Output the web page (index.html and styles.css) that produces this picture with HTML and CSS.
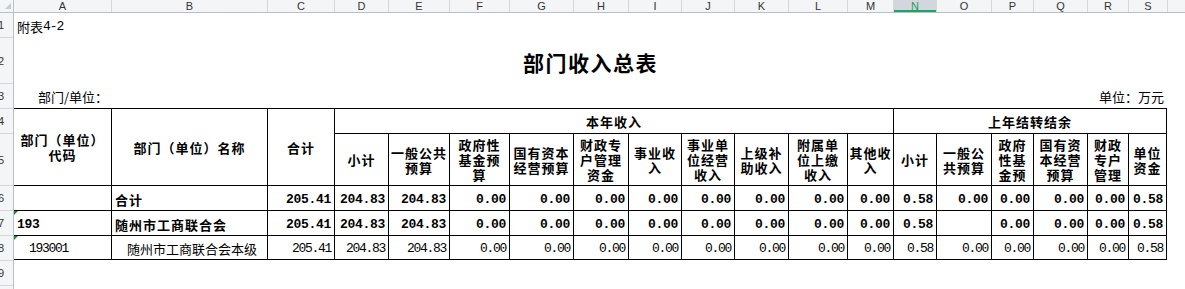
FILE: index.html
```html
<!DOCTYPE html>
<html lang="zh-CN">
<head>
<meta charset="utf-8">
<title>部门收入总表</title>
<link rel="stylesheet" href="styles.css">
</head>
<body>
<div class="colhead">
  <div class="corner"></div>
  <div class="ch first">A</div><div class="ch">B</div><div class="ch">C</div><div class="ch">D</div>
  <div class="ch">E</div><div class="ch">F</div><div class="ch">G</div><div class="ch">H</div>
  <div class="ch">I</div><div class="ch">J</div><div class="ch">K</div><div class="ch">L</div>
  <div class="ch">M</div><div class="ch sel">N</div><div class="ch">O</div><div class="ch">P</div>
  <div class="ch">Q</div><div class="ch">R</div><div class="ch">S</div><div class="ch"></div>
</div>
<div class="body">
  <div class="rowhead">
    <div class="rh h24"><span>1</span></div>
    <div class="rh h46"><span>2</span></div>
    <div class="rh h25"><span>3</span></div>
    <div class="rh h25"><span>4</span></div>
    <div class="rh h52"><span>5</span></div>
    <div class="rh h25"><span>6</span></div>
    <div class="rh h25"><span>7</span></div>
    <div class="rh h25"><span>8</span></div>
    <div class="rh h25"><span>9</span></div>
    <div class="rh h4"></div>
  </div>
  <div class="grid">
    <div class="note"><span>附表</span><span class="dg">4-2</span></div>
    <div class="title">部门收入总表</div>
    <div class="unit-l">部门/单位：</div>
    <div class="unit-r">单位：万元</div>

    <div class="t a hd rows2">部门（单位）<br>代码</div>
    <div class="t hd rows2">部门（单位）名称</div>
    <div class="t hd rows2">合计</div>
    <div class="t hd span10">本年收入</div>
    <div class="t hd span6 last">上年结转结余</div>

    <div class="t hd">小计</div>
    <div class="t hd">一般公共<br>预算</div>
    <div class="t hd">政府性<br>基金预<br>算</div>
    <div class="t hd">国有资本<br>经营预算</div>
    <div class="t hd">财政专<br>户管理<br>资金</div>
    <div class="t hd">事业收<br>入</div>
    <div class="t hd">事业单<br>位经营<br>收入</div>
    <div class="t hd">上级补<br>助收入</div>
    <div class="t hd">附属单<br>位上缴<br>收入</div>
    <div class="t hd">其他收<br>入</div>
    <div class="t hd">小计</div>
    <div class="t hd">一般公<br>共预算</div>
    <div class="t hd">政府<br>性基<br>金预</div>
    <div class="t hd">国有资<br>本经营<br>预算</div>
    <div class="t hd">财政<br>专户<br>管理</div>
    <div class="t hd last">单位<br>资金</div>

    <div class="t a"></div>
    <div class="t txt b">合计</div>
    <div class="t n b">205.41</div>
    <div class="t n b">204.83</div>
    <div class="t n b">204.83</div>
    <div class="t n b">0.00</div>
    <div class="t n b">0.00</div>
    <div class="t n b">0.00</div>
    <div class="t n b">0.00</div>
    <div class="t n b">0.00</div>
    <div class="t n b">0.00</div>
    <div class="t n b">0.00</div>
    <div class="t n b">0.00</div>
    <div class="t n b">0.58</div>
    <div class="t n b">0.00</div>
    <div class="t n b">0.00</div>
    <div class="t n b">0.00</div>
    <div class="t n b">0.00</div>
    <div class="t n b last">0.58</div>

    <div class="t a code b flag">193</div>
    <div class="t txt b">随州市工商联合会</div>
    <div class="t n b">205.41</div>
    <div class="t n b">204.83</div>
    <div class="t n b">204.83</div>
    <div class="t n b">0.00</div>
    <div class="t n b">0.00</div>
    <div class="t n b">0.00</div>
    <div class="t n b">0.00</div>
    <div class="t n b">0.00</div>
    <div class="t n b">0.00</div>
    <div class="t n b">0.00</div>
    <div class="t n b">0.00</div>
    <div class="t n b">0.58</div>
    <div class="t n b"></div>
    <div class="t n b">0.00</div>
    <div class="t n b">0.00</div>
    <div class="t n b">0.00</div>
    <div class="t n b last">0.58</div>

    <div class="t a code indent flag bot">193001</div>
    <div class="t txt indent bot">随州市工商联合会本级</div>
    <div class="t n bot">205.41</div>
    <div class="t n bot">204.83</div>
    <div class="t n bot">204.83</div>
    <div class="t n bot">0.00</div>
    <div class="t n bot">0.00</div>
    <div class="t n bot">0.00</div>
    <div class="t n bot">0.00</div>
    <div class="t n bot">0.00</div>
    <div class="t n bot">0.00</div>
    <div class="t n bot">0.00</div>
    <div class="t n bot">0.00</div>
    <div class="t n bot">0.58</div>
    <div class="t n bot">0.00</div>
    <div class="t n bot">0.00</div>
    <div class="t n bot">0.00</div>
    <div class="t n bot">0.00</div>
    <div class="t n bot last">0.58</div>
  </div>
</div>
</body>
</html>
```
FILE: styles.css
```css
* { box-sizing: border-box; margin: 0; padding: 0; }

html, body {
  width: 1185px;
  height: 289px;
  overflow: hidden;
  background: #fff;
}

body {
  font-family: "Noto Sans CJK SC", "Liberation Sans", sans-serif;
  font-size: 13px;
  color: #000;
}

/* ---------- column header bar ---------- */
.colhead {
  display: grid;
  grid-template-columns: 14px 97px 156px 67px 54px 61px 60px 64px 55px 53px 53px 54px 59px 46px 43px 55px 42px 54px 41px 39px 18px;
  height: 13px;
  background: #f4f5f7;
  border-bottom: 1px solid #b8c0cd;
  font-family: "Liberation Sans", Arial, sans-serif;
  font-size: 11px;
  color: #333;
}

.corner {
  position: relative;
  border-right: 1px solid #b8c0cd;
}

.corner::after {
  content: "";
  position: absolute;
  right: 2px;
  bottom: 3px;
  border-left: 6px solid transparent;
  border-bottom: 6px solid #c6cad1;
}

.ch {
  border-left: 1px solid #d3d7de;
  text-align: center;
  line-height: 12px;
  height: 12px;
}

.ch.first { border-left: none; }

.ch.sel {
  background: #d3d6dc;
  color: #1e9e5e;
  box-shadow: inset 0 -2px 0 #21a366;
}

/* ---------- body ---------- */
.body {
  display: flex;
  height: 276px;
  overflow: hidden;
}

.rowhead {
  width: 14px;
  flex: none;
  background: #f4f5f7;
  border-right: 1px solid #b8c0cd;
  font-family: "Liberation Sans", Arial, sans-serif;
  font-size: 11px;
  color: #333;
}

.rh {
  display: flex;
  align-items: center;
  overflow: hidden;
  border-top: 1px solid #d3d7de;
}

.rh:first-child { border-top: none; }

.rh span {
  display: block;
  flex: none;
  width: 28px;
  margin-left: -13px;
  text-align: center;
}

.h4 { height: 4px; }
.h24 { height: 24px; }
.h25 { height: 25px; }
.h46 { height: 46px; }
.h52 { height: 52px; }

/* ---------- sheet grid ---------- */
.grid {
  display: grid;
  grid-template-columns: 97px 156px 67px 54px 61px 60px 64px 55px 53px 53px 54px 59px 46px 43px 55px 42px 54px 41px 39px;
  grid-template-rows: 24px 46px 25px 25px 52px 25px 25px 25px 25px;
  align-content: start;
}

.note {
  grid-column: 1 / -1;
  display: flex;
  align-items: center;
  padding: 3px 0 0 3px;
}

.dg {
  font-family: "Liberation Mono", monospace;
  letter-spacing: -1px;
}

.title {
  grid-column: 1 / -1;
  display: flex;
  align-items: center;
  justify-content: center;
  padding-top: 3px;
  font-size: 21px;
  font-weight: 700;
  letter-spacing: 1.5px;
}

.unit-l {
  grid-column: 1 / 4;
  display: flex;
  align-items: center;
  padding: 1px 0 0 24px;
}

.unit-r {
  grid-column: 4 / -1;
  display: flex;
  align-items: center;
  justify-content: flex-end;
  padding: 1px 3px 0 0;
}

/* table cells */
.t {
  position: relative;
  display: flex;
  align-items: center;
  border-top: 1px solid #000;
  border-left: 1px solid #000;
  overflow: hidden;
  white-space: nowrap;
  padding-top: 2px;
}

.t.a { border-left: none; }
.t.last { border-right: 1px solid #000; }
.t.bot { border-bottom: 1px solid #000; }

.hd {
  justify-content: center;
  text-align: center;
  font-weight: 700;
  letter-spacing: 1px;
  line-height: 15px;
  padding-top: 0;
}

.rows2 { grid-row: span 2; }
.span10 { grid-column: span 10; }
.span6 { grid-column: span 6; }

.txt { padding-left: 3px; }
.code { padding-left: 3px; }

.b { font-weight: 700; letter-spacing: 1px; }

.indent { padding-left: 15px; }

.n {
  justify-content: flex-end;
  padding-right: 3px;
  font-family: "Liberation Mono", monospace;
  letter-spacing: -1.3px;
}

.n.b { letter-spacing: -0.3px; }

.code.b {
  font-family: "Liberation Mono", monospace;
  letter-spacing: -0.3px;
}

.code.indent {
  font-family: "Liberation Mono", monospace;
  letter-spacing: -1.3px;
}

.flag::before {
  content: "";
  position: absolute;
  left: 0;
  top: 0;
  border-top: 4px solid #1c8a3b;
  border-right: 4px solid transparent;
}
```
